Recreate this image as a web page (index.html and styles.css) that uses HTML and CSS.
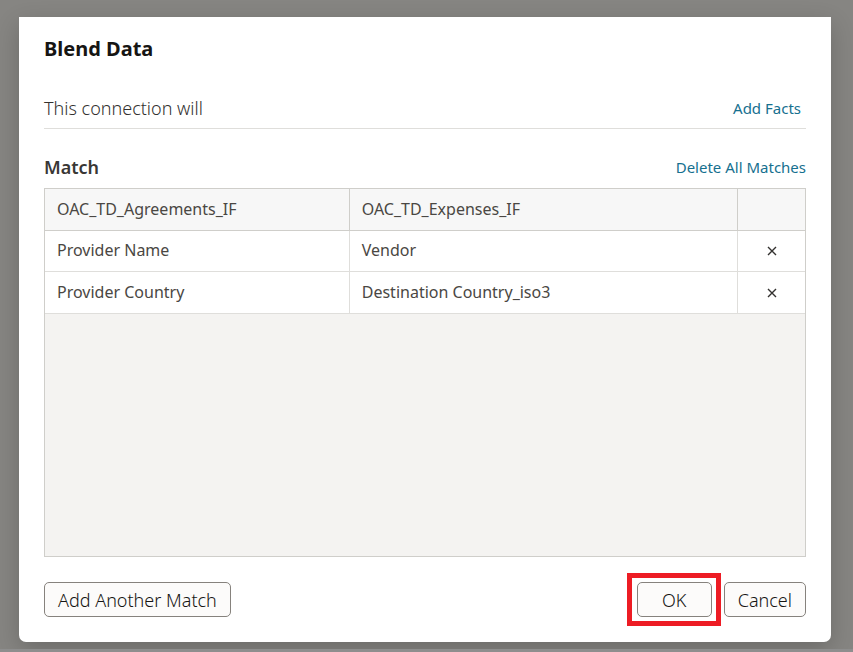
FILE: index.html
```html
<!DOCTYPE html>
<html lang="en">
<head>
<meta charset="utf-8">
<title>Blend Data</title>
<link rel="stylesheet" href="styles.css">
</head>
<body>
<main class="dialog" role="dialog" aria-labelledby="dialog-title">
  <h1 class="title" id="dialog-title">Blend Data</h1>
  <div class="connection">
    <span class="connection-text">This connection will</span>
    <a class="link" href="#">Add Facts</a>
  </div>
  <div class="match-head">
    <h2 class="match-title">Match</h2>
    <a class="link" href="#">Delete All Matches</a>
  </div>
  <div class="match-box">
    <table class="matches">
      <colgroup><col class="col-left"><col class="col-right"><col class="col-action"></colgroup>
      <thead>
        <tr><th>OAC_TD_Agreements_IF</th><th>OAC_TD_Expenses_IF</th><th></th></tr>
      </thead>
      <tbody>
        <tr>
          <td>Provider Name</td><td>Vendor</td>
          <td class="action"><button class="remove" type="button" aria-label="Delete match"><svg class="cross" viewBox="0 0 10 10"><path d="M1 1L9 9M9 1L1 9"/></svg></button></td>
        </tr>
        <tr>
          <td>Provider Country</td><td>Destination Country_iso3</td>
          <td class="action"><button class="remove" type="button" aria-label="Delete match"><svg class="cross" viewBox="0 0 10 10"><path d="M1 1L9 9M9 1L1 9"/></svg></button></td>
        </tr>
      </tbody>
    </table>
  </div>
  <footer class="footer">
    <button class="btn" type="button">Add Another Match</button>
    <div class="confirm">
      <div class="highlight"><button class="btn btn-ok" type="button">OK</button></div>
      <button class="btn" type="button">Cancel</button>
    </div>
  </footer>
</main>
</body>
</html>
```
FILE: styles.css
```css
* {
  box-sizing: border-box;
}

body {
  margin: 0;
  min-height: 100vh;
  padding: 17px 22px 7px 19px;
  display: flex;
  flex-direction: column;
  background: #868582;
  border-bottom: 3px solid #8e8e8e;
  color: #4a4743;
  font-family: "Noto Sans", "Open Sans", sans-serif;
  font-size: 16px;
  line-height: 24px;
}

.dialog {
  flex: 1;
  display: flex;
  flex-direction: column;
  padding: 16px 25px;
  background: #fff;
  border-radius: 0 0 7px 7px;
  box-shadow: 0 8px 24px rgba(0, 0, 0, 0.2);
}

.title {
  margin: 0;
  color: #161513;
  font-size: 20px;
  font-weight: 700;
  line-height: 32px;
}

.connection {
  display: flex;
  align-items: center;
  justify-content: space-between;
  margin-top: 24px;
  padding: 5px 5px 7px 0;
  height: 40px;
  border-bottom: 1px solid #dfdedb;
}

.connection-text {
  color: #33312f;
  font-size: 18px;
  font-weight: 300;
}

.link {
  color: #16708f;
  font-size: 15px;
  text-decoration: none;
}

.match-head {
  display: flex;
  align-items: center;
  justify-content: space-between;
  margin-top: 26px;
  height: 24px;
}

.match-title {
  margin: 0;
  color: #393735;
  font-size: 18px;
  font-weight: 600;
}

.match-box {
  flex: 1;
  margin-top: 9px;
  background: #f4f3f1;
  border: 1px solid #cfceca;
}

.matches {
  width: 100%;
  table-layout: fixed;
  border-collapse: separate;
  border-spacing: 0;
}

.col-left {
  width: 40.1%;
}

.col-action {
  width: 67px;
}

.matches th,
.matches td {
  height: 41px;
  padding: 0 12px 2px;
  text-align: left;
  font-weight: 400;
  border-right: 1px solid #dfdedb;
  border-bottom: 1px solid #dfdedb;
}

.matches th {
  height: 42px;
  background: #f7f7f7;
  border-color: #cfceca;
}

.matches td {
  background: #fff;
}

.matches tr:last-child td {
  height: 42px;
}

.matches th:last-child,
.matches td:last-child {
  border-right: 0;
}

.matches .action {
  padding: 0 0 2px;
  text-align: center;
}

.remove {
  display: inline-flex;
  padding: 6px;
  background: none;
  border: 0;
  vertical-align: middle;
}

.cross {
  width: 10px;
  height: 10px;
  fill: none;
  stroke: #33312f;
  stroke-width: 1.4;
}

.footer {
  display: flex;
  align-items: center;
  justify-content: space-between;
  margin-top: 16px;
}

.confirm {
  display: flex;
  align-items: center;
  gap: 3px;
}

.highlight {
  padding: 4px 4px 4px 5px;
  border: 5px solid #ed1c24;
}

.btn {
  height: 35px;
  padding: 0 13px;
  background: #fcfbfa;
  border: 1px solid #86827d;
  border-radius: 5px;
  color: #161513;
  font-family: inherit;
  font-size: 18px;
  font-weight: 300;
}

.btn-ok {
  display: block;
  width: 75px;
}
```
